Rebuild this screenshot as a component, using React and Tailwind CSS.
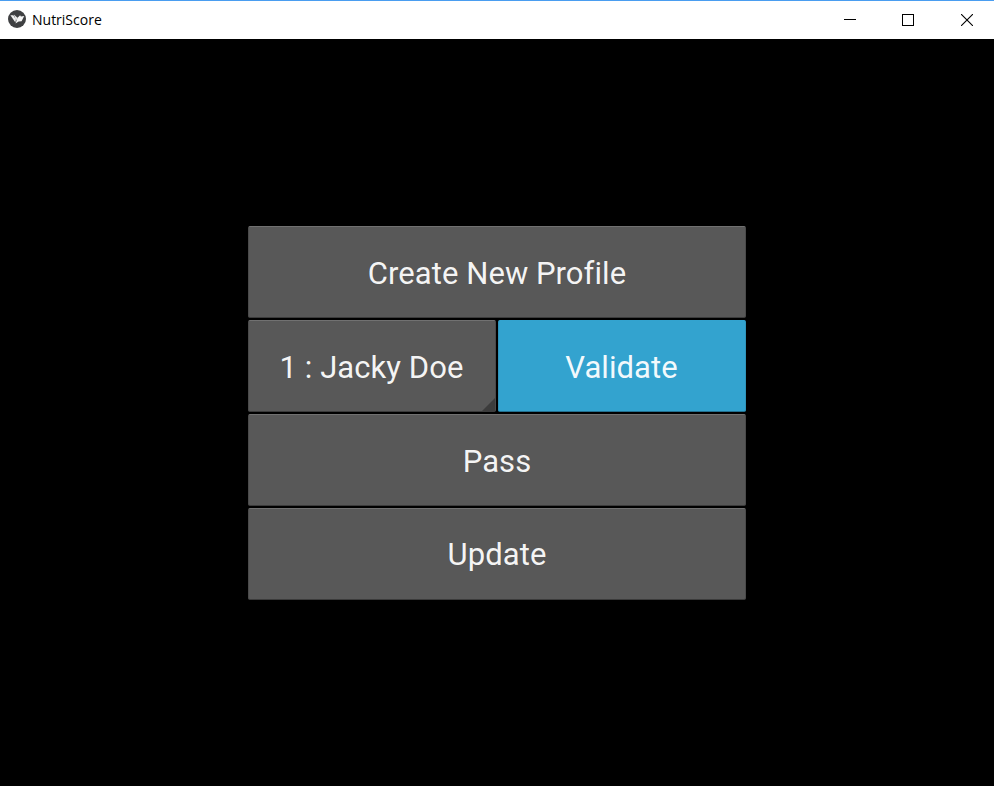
const buttonBase =
  "relative flex h-[92px] items-center justify-center rounded-[2px] border-x border-b border-t text-[31px] leading-none text-white/95";
const grey = "border-x-[#4a4a4a] border-b-[#3b3b3b] border-t-[#717171] bg-[#585858]";
const blue = "border-x-[#2e94bb] border-b-[#22708f] border-t-[#33a3cf] bg-[#33a3cf]";

function Button({ children, active = false, corner = false, width = "w-full", inset = "pt-[2px]" }) {
  return (
    <button className={`${buttonBase} ${active ? blue : grey} ${width} ${inset}`}>
      <span className="whitespace-pre tracking-[0.06px] [font-variant-ligatures:none]">{children}</span>
      {corner && (
        <svg className="absolute bottom-0 right-0" width="13" height="13" viewBox="0 0 13 13">
          <path d="M13 0V13H0Z" fill="#3c3c3c" />
        </svg>
      )}
    </button>
  );
}

function TitleBar() {
  return (
    <header className="flex h-[39px] items-center border-t border-[#4a9df0] bg-white">
      <svg className="mb-[2px] ml-2" width="18" height="18" viewBox="0 0 18 18">
        <circle cx="9" cy="9" r="9" fill="#3f4042" />
        <path d="M2.4 5.2L5.4 5.2L7.8 9.4L7.4 12.4Z" fill="#f2f2f2" />
        <path d="M5.8 4.6L9.8 8.1L7.9 11Z" fill="#e8e8e8" />
        <path d="M7.5 13.4L9.6 7.7L12.1 5.2L12.9 6.5L16.2 6.1L13.6 11.2L10.6 11.4Z" fill="#f7f7f7" />
      </svg>
      <h1 className="ml-[6px] font-['Open_Sans','Noto_Sans',sans-serif] text-[14px] leading-none text-black">
        NutriScore
      </h1>
      <div className="ml-auto flex h-full">
        <button className="flex w-[58px] items-center justify-center" aria-label="Minimize">
          <svg width="12" height="12" shapeRendering="crispEdges"><path d="M0 5.5H12" stroke="#000" /></svg>
        </button>
        <button className="flex w-[58px] items-center justify-center" aria-label="Maximize">
          <svg width="12" height="12" shapeRendering="crispEdges"><rect x=".5" y=".5" width="11" height="11" fill="none" stroke="#000" /></svg>
        </button>
        <button className="flex w-[57px] items-center justify-center pl-[3px]" aria-label="Close">
          <svg width="12" height="12"><path d="M0 0L12 12M12 0L0 12" stroke="#000" strokeWidth="1.1" /></svg>
        </button>
      </div>
    </header>
  );
}

export default function App() {
  return (
    <div className="flex h-[786px] w-[994px] flex-col overflow-hidden bg-black font-[Roboto,sans-serif]">
      <TitleBar />
      <main className="flex flex-1 justify-center pt-[187px]">
        <div className="flex w-[498px] flex-col gap-[2px]">
          <Button>Create New Profile</Button>
          <div className="flex gap-[2px]">
            <Button corner width="w-[248px]" inset="pt-[2px] pr-px">1 : Jacky Doe</Button>
            <Button active width="w-[248px]" inset="pt-[2px] pr-px">Validate</Button>
          </div>
          <Button>Pass</Button>
          <Button inset="pt-0">Update</Button>
        </div>
      </main>
    </div>
  );
}
